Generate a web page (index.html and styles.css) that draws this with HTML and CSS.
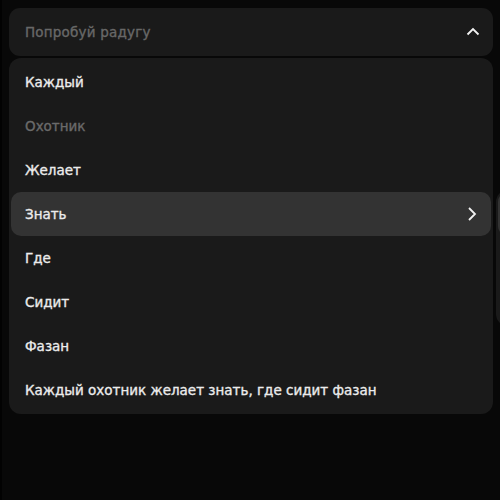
FILE: index.html
```html
<!DOCTYPE html>
<html lang="ru">
<head>
<meta charset="utf-8">
<link rel="stylesheet" href="styles.css">
</head>
<body>
<div class="wrap">
  <div class="trigger">
    <span class="placeholder">Попробуй радугу</span>
    <svg class="chev" width="14" height="14" viewBox="0 0 14 14"><path d="M1.5 9.5 L7 4 L12.5 9.5" fill="none" stroke="#f2f2f2" stroke-width="1.8"/></svg>
  </div>
  <div class="menu">
    <div class="item">Каждый</div>
    <div class="item disabled">Охотник</div>
    <div class="item">Желает</div>
    <div class="item active">Знать
      <svg class="chev" width="14" height="14" viewBox="0 0 14 14"><path d="M4 1 L10 7 L4 13" fill="none" stroke="#f2f2f2" stroke-width="1.8"/></svg>
    </div>
    <div class="item">Где</div>
    <div class="item">Сидит</div>
    <div class="item">Фазан</div>
    <div class="item">Каждый охотник желает знать, где сидит фазан</div>
    <div class="submenu">
      <div class="item active"></div>
      <div class="item"></div>
      <div class="item"></div>
    </div>
  </div>
</div>
</body>
</html>
```
FILE: styles.css
```css
html, body {
  margin: 0;
  padding: 0;
  height: 100%;
  overflow: hidden;
}
body {
  background: #080808;
  border-left: 2px solid #020202;
  box-sizing: border-box;
  font-family: "DejaVu Sans", sans-serif;
  font-size: 13.5px;
  font-weight: 400;
  color: #ececec;
  -webkit-text-stroke: 0.35px currentColor;
}
.wrap {
  padding: 8px 0 0 7px;
  width: 484px;
  display: flex;
  flex-direction: column;
  gap: 2px;
}
.trigger {
  height: 48px;
  background: #1a1a1a;
  border-radius: 11px;
  display: flex;
  align-items: center;
  justify-content: space-between;
  padding: 0 13px 0 16px;
}
.placeholder {
  color: #686868;
  letter-spacing: 0.2px;
}
.menu {
  position: relative;
  background: #1a1a1a;
  border-radius: 12px;
  padding: 2px;
  display: flex;
  flex-direction: column;
}
.item {
  height: 44px;
  display: flex;
  align-items: center;
  justify-content: space-between;
  padding: 0 12px 0 14px;
  border-radius: 10px;
  white-space: nowrap;
}
.item.disabled {
  color: #6a6a6a;
}
.item.active {
  background: #333;
}
.submenu {
  position: absolute;
  left: 487px;
  top: 132px;
  width: 200px;
  background: #1a1a1a;
  border-radius: 12px;
  padding: 2px;
  display: flex;
  flex-direction: column;
}
```
